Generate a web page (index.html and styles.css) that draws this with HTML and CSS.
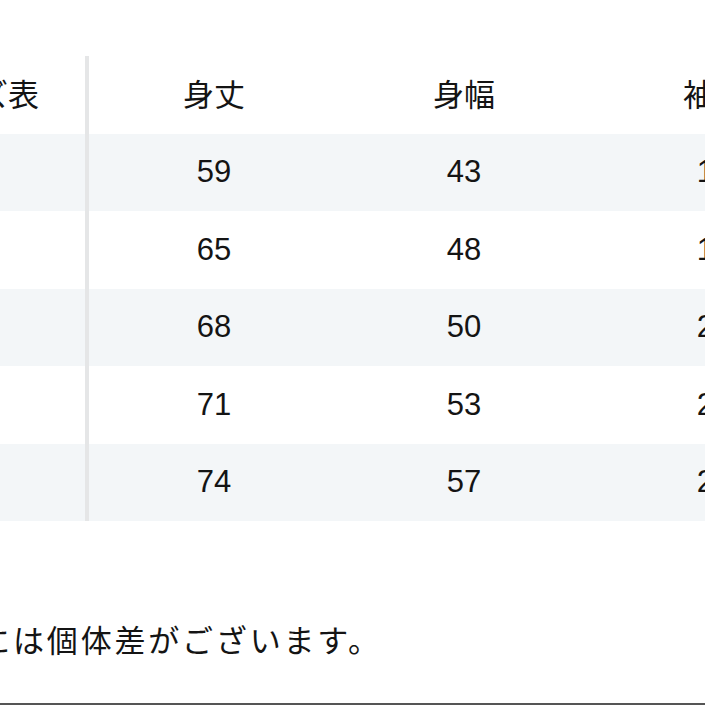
FILE: index.html
```html
<!DOCTYPE html>
<html lang="ja">
<head>
<meta charset="utf-8">
<title>サイズ表</title>
<link rel="stylesheet" href="styles.css">
</head>
<body>
<div class="page">
  <div class="size-table">
    <div class="row head">
      <div class="cell label">サイズ表</div>
      <div class="cell">身丈</div>
      <div class="cell">身幅</div>
      <div class="cell">袖丈</div>
    </div>
    <div class="row stripe">
      <div class="cell label">S</div>
      <div class="cell">59</div>
      <div class="cell">43</div>
      <div class="cell">18</div>
    </div>
    <div class="row">
      <div class="cell label">M</div>
      <div class="cell">65</div>
      <div class="cell">48</div>
      <div class="cell">19</div>
    </div>
    <div class="row stripe">
      <div class="cell label">L</div>
      <div class="cell">68</div>
      <div class="cell">50</div>
      <div class="cell">20</div>
    </div>
    <div class="row">
      <div class="cell label">XL</div>
      <div class="cell">71</div>
      <div class="cell">53</div>
      <div class="cell">21</div>
    </div>
    <div class="row stripe">
      <div class="cell label">XXL</div>
      <div class="cell">74</div>
      <div class="cell">57</div>
      <div class="cell">22</div>
    </div>
  </div>
  <p class="note">※サイズには個体差がございます。</p>
  <div class="bottom-rule"></div>
</div>
</body>
</html>
```

FILE: styles.css
```css
html, body {
  margin: 0;
  padding: 0;
  overflow: hidden;
  background: #ffffff;
}

body {
  font-family: "Liberation Sans", "Noto Sans CJK JP", sans-serif;
  color: #141414;
}

.page {
  height: 705px;
  display: flex;
  flex-direction: column;
  padding-top: 56px;
  box-sizing: border-box;
}

.size-table {
  margin-left: -170px;
  width: 1005px;
  display: flex;
  flex-direction: column;
}

.row {
  display: grid;
  grid-template-columns: 259px 250px 250px 250px;
  height: 77.5px;
}

.row.stripe {
  background: #f3f6f8;
}

.cell {
  display: flex;
  align-items: center;
  justify-content: center;
  font-size: 31px;
}

.head .cell {
  padding-bottom: 4px;
}

.cell.label {
  justify-content: flex-start;
  padding-left: 86px;
  border-right: 4px solid #e5e6e7;
}

.note {
  margin: 101px 0 0 0;
  font-size: 31px;
  line-height: 40px;
  letter-spacing: 2.8px;
  white-space: nowrap;
  text-indent: -155px;
}

.bottom-rule {
  margin-top: auto;
  height: 2px;
  background: #555555;
}
```
